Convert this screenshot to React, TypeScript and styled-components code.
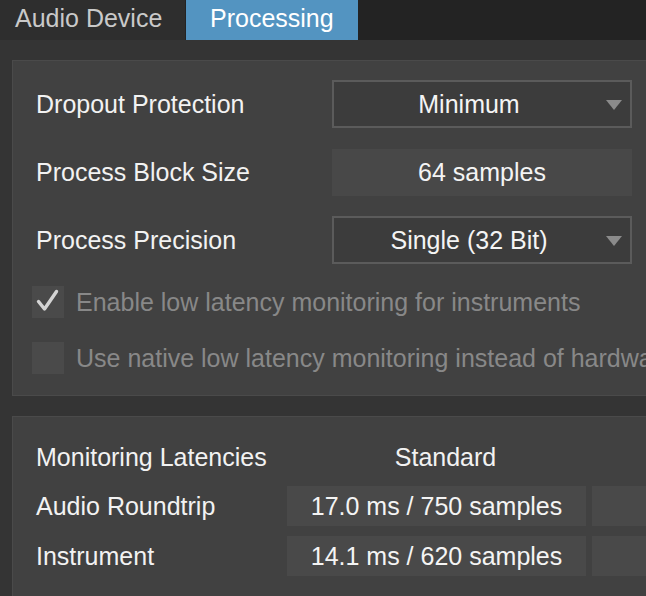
import React from 'react'
import styled, { createGlobalStyle } from 'styled-components'

const GlobalStyle = createGlobalStyle`
  html, body {
    margin: 0;
    padding: 0;
    background: #343434;
    overflow: hidden;
  }
  body {
    font-family: "Liberation Sans", Arial, Helvetica, sans-serif;
    font-size: 25px;
    color: #f2f2f2;
  }
`

const settings = [
  { label: 'Dropout Protection', value: 'Minimum', kind: 'select' },
  { label: 'Process Block Size', value: '64 samples', kind: 'field' },
  { label: 'Process Precision', value: 'Single (32 Bit)', kind: 'select' },
]

const options = [
  { label: 'Enable low latency monitoring for instruments', checked: true },
  { label: 'Use native low latency monitoring instead of hardwa', checked: false },
]

const latencies = [
  { label: 'Audio Roundtrip', standard: '17.0 ms / 750 samples' },
  { label: 'Instrument', standard: '14.1 ms / 620 samples' },
]

const App: React.FC = () => {
  return (
    <Page>
      <GlobalStyle />
      <TabBar>
        <Tab $active={false} $width={185} $padLeft={15}>Audio Device</Tab>
        <Tab $active={true} $width={172} $padLeft={24}>Processing</Tab>
      </TabBar>
      <Body>
        <Panel $pb={21}>
          <SettingsGrid>
            {settings.map(s => (
              <React.Fragment key={s.label}>
                <Label>{s.label}</Label>
                {s.kind === 'select' ? (
                  <Select>
                    <span>{s.value}</span>
                    <Arrow width="16" height="10" viewBox="0 0 16 10">
                      <path d="M0 0 L16 0 L8 10 Z" fill="#8b8b8b" />
                    </Arrow>
                  </Select>
                ) : (
                  <Field>{s.value}</Field>
                )}
              </React.Fragment>
            ))}
          </SettingsGrid>
          <Checks>
            {options.map(o => (
              <CheckRow key={o.label}>
                <CheckBox>
                  {o.checked && (
                    <svg width="32" height="32" viewBox="0 0 32 32">
                      <path d="M6.5 15.5 L12.5 23 L24.5 5.5" fill="none" stroke="#d4d4d4" strokeWidth="3.4" strokeLinecap="round" strokeLinejoin="round" />
                    </svg>
                  )}
                </CheckBox>
                <CheckLabel>{o.label}</CheckLabel>
              </CheckRow>
            ))}
          </Checks>
        </Panel>
        <Panel $pb={40}>
          <LatencyGrid>
            <HeaderLabel>Monitoring Latencies</HeaderLabel>
            <HeaderCell>Standard</HeaderCell>
            <HeaderCell />
            {latencies.map(l => (
              <React.Fragment key={l.label}>
                <Label>{l.label}</Label>
                <ValueCell>{l.standard}</ValueCell>
                <ValueCell />
              </React.Fragment>
            ))}
          </LatencyGrid>
        </Panel>
      </Body>
    </Page>
  )
}

export default App

const Page = styled.div`
  width: 900px;
  height: 596px;
  background: #343434;
`

const TabBar = styled.div`
  display: flex;
  height: 40px;
  background: #232323;
`

const Tab = styled.div<{ $active: boolean; $width: number; $padLeft: number }>`
  display: flex;
  align-items: center;
  width: ${p => p.$width}px;
  height: 40px;
  box-sizing: border-box;
  padding: 0 0 4px ${p => p.$padLeft}px;
  background: ${p => (p.$active ? '#5394c1' : '#2e2e2e')};
  color: ${p => (p.$active ? '#ffffff' : '#c9c9c9')};
  margin-right: ${p => (p.$active ? 0 : 1)}px;
  font-size: 25px;
  white-space: nowrap;
  overflow: hidden;
`

const Body = styled.div`
  display: flex;
  flex-direction: column;
  gap: 20px;
  padding: 20px 0 0 12px;
`

const Panel = styled.div<{ $pb: number }>`
  background: #414141;
  border: 1px solid #4a4a4a;
  padding: 19px 0 ${p => p.$pb}px 23px;
`

const SettingsGrid = styled.div`
  display: grid;
  grid-template-columns: 296px 300px;
  grid-auto-rows: 48px;
  row-gap: 20px;
  align-items: center;
`

const Label = styled.div`
  color: #f2f2f2;
  white-space: nowrap;
  line-height: 1;
`

const HeaderLabel = styled(Label)`
  padding-top: 3px;
`

const Select = styled.div`
  position: relative;
  height: 48px;
  box-sizing: border-box;
  border: 2px solid #5b5b5b;
  background: #3c3c3c;
  display: flex;
  align-items: center;
  justify-content: center;
  padding-right: 26px;
  color: #f4f4f4;
`

const Arrow = styled.svg`
  position: absolute;
  right: 8px;
  top: 18px;
`

const Field = styled.div`
  height: 47px;
  background: #484848;
  display: flex;
  align-items: center;
  justify-content: center;
  color: #f4f4f4;
`

const Checks = styled.div`
  display: flex;
  flex-direction: column;
  gap: 24px;
  margin-top: 22px;
  margin-left: -4px;
`

const CheckRow = styled.div`
  display: flex;
  align-items: center;
  gap: 12px;
  height: 32px;
`

const CheckBox = styled.div`
  width: 32px;
  height: 32px;
  flex: none;
  background: #4a4a4a;
`

const CheckLabel = styled.div`
  color: #888888;
  white-space: nowrap;
`

const LatencyGrid = styled.div`
  display: grid;
  grid-template-columns: 245px 299px 299px;
  grid-template-rows: 40px 40px 40px;
  column-gap: 6px;
  row-gap: 10px;
  align-items: center;
`

const HeaderCell = styled.div`
  text-align: center;
  color: #f2f2f2;
  padding-top: 3px;
  padding-left: 18px;
`

const ValueCell = styled.div`
  height: 40px;
  background: #494949;
  display: flex;
  align-items: center;
  justify-content: center;
  color: #f4f4f4;
`
